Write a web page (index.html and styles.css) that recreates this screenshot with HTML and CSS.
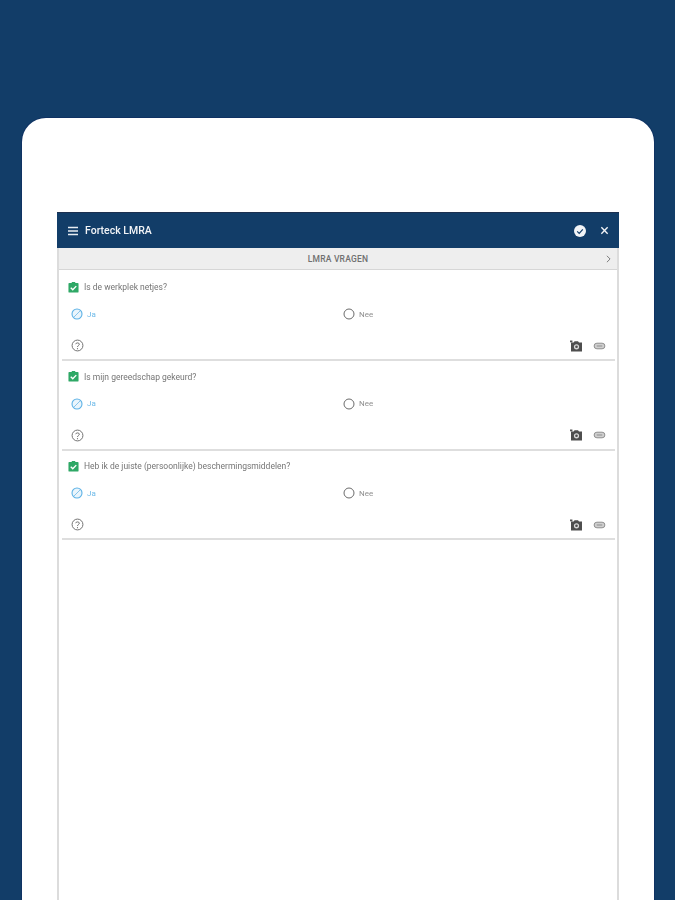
FILE: index.html
```html
<!doctype html>
<html lang="en">
	<head>
		<meta charset="UTF-8" />
		<meta name="viewport" content="width=device-width, initial-scale=1.0" />
		<title>Forteck LMRA</title>
		<link rel="stylesheet" href="styles.css">
	</head>
	<body>
		<svg class="icon-defs" width="0" height="0">
			<symbol id="i-check" viewBox="0 0 12 12">
				<rect x="0.5" y="1" width="11" height="10.5" rx="1" fill="#2fa866" />
				<rect x="4" y="0" width="4" height="2" rx="0.6" fill="#2fa866" />
				<path d="M3 6.3l2.2 2.2 3.8-4" fill="none" stroke="#fff" stroke-width="1.5" />
			</symbol>
			<symbol id="i-ja" viewBox="0 0 12 12">
				<circle cx="6" cy="6" r="5" fill="#eaf5fc" stroke="#5db2e6" stroke-width="1.1" />
				<path d="M3 9L9 3" stroke="#7cc0ea" stroke-width="0.9" />
			</symbol>
			<symbol id="i-nee" viewBox="0 0 12 12">
				<circle cx="6" cy="6" r="5" fill="none" stroke="#6b6b6b" stroke-width="1" />
			</symbol>
			<symbol id="i-help" viewBox="0 0 12 12">
				<circle cx="6" cy="6" r="5" fill="none" stroke="#6e6e6e" stroke-width="0.9" />
				<path d="M4.3 4.8C4.4 3.2 7.7 3.2 7.7 4.8C7.7 6 6 6 6 7.4" fill="none" stroke="#6e6e6e" stroke-width="0.9" />
				<circle cx="6" cy="8.9" r="0.55" fill="#6e6e6e" />
			</symbol>
			<symbol id="i-camera" viewBox="0 0 14 14">
				<path d="M1 1.5h2.4v1.8H1z" fill="#555" />
				<path d="M2 3.4h2.6l1-1.2h3.4l1 1.2H13v9H2z" fill="#4e4e4e" />
				<circle cx="7.5" cy="7.8" r="2.6" fill="#d8d8d8" />
				<circle cx="7.5" cy="7.8" r="1.3" fill="#4e4e4e" />
			</symbol>
			<symbol id="i-clip" viewBox="0 0 14 10">
				<rect x="1.2" y="2" width="11.6" height="6" rx="3" fill="#d0d0d0" stroke="#888" stroke-width="1" />
				<path d="M4 5h6" stroke="#888" stroke-width="1" />
			</symbol>
		</svg>

		<div class="panel">
			<div class="app">
				<header class="topbar">
					<svg class="menu-icon" viewBox="0 0 12 10"><path d="M1 1.5h10M1 5h10M1 8.5h10" stroke="#e8edf2" stroke-width="1.3" /></svg>
					<span class="app-title">Forteck LMRA</span>
					<svg class="done-icon" viewBox="0 0 12 12">
						<circle cx="6" cy="6" r="6" fill="#f2f4f7" />
						<path d="M3.2 6.3l2 2 3.6-4" fill="none" stroke="#123d68" stroke-width="1.2" />
					</svg>
					<svg class="close-icon" viewBox="0 0 10 10"><path d="M1.5 1.5l7 7M8.5 1.5l-7 7" stroke="#f2f4f7" stroke-width="1.5" /></svg>
				</header>
				<div class="subbar">
					<span class="subbar-title">LMRA VRAGEN</span>
					<svg class="next-icon" viewBox="0 0 6 10"><path d="M1 1l4 4-4 4" fill="none" stroke="#777" stroke-width="1.2" /></svg>
				</div>

				<div class="cards">
					<section class="card">
						<div class="question">
							<svg class="check"><use href="#i-check" /></svg>
							<span>Is de werkplek netjes?</span>
						</div>
						<div class="answers">
							<div class="answer yes"><svg class="radio"><use href="#i-ja" /></svg><span>Ja</span></div>
							<div class="answer"><svg class="radio"><use href="#i-nee" /></svg><span>Nee</span></div>
						</div>
						<div class="actions">
							<svg class="help"><use href="#i-help" /></svg>
							<svg class="camera"><use href="#i-camera" /></svg>
							<svg class="clip"><use href="#i-clip" /></svg>
						</div>
					</section>

					<section class="card">
						<div class="question">
							<svg class="check"><use href="#i-check" /></svg>
							<span>Is mijn gereedschap gekeurd?</span>
						</div>
						<div class="answers">
							<div class="answer yes"><svg class="radio"><use href="#i-ja" /></svg><span>Ja</span></div>
							<div class="answer"><svg class="radio"><use href="#i-nee" /></svg><span>Nee</span></div>
						</div>
						<div class="actions">
							<svg class="help"><use href="#i-help" /></svg>
							<svg class="camera"><use href="#i-camera" /></svg>
							<svg class="clip"><use href="#i-clip" /></svg>
						</div>
					</section>

					<section class="card">
						<div class="question">
							<svg class="check"><use href="#i-check" /></svg>
							<span>Heb ik de juiste (persoonlijke) beschermingsmiddelen?</span>
						</div>
						<div class="answers">
							<div class="answer yes"><svg class="radio"><use href="#i-ja" /></svg><span>Ja</span></div>
							<div class="answer"><svg class="radio"><use href="#i-nee" /></svg><span>Nee</span></div>
						</div>
						<div class="actions">
							<svg class="help"><use href="#i-help" /></svg>
							<svg class="camera"><use href="#i-camera" /></svg>
							<svg class="clip"><use href="#i-clip" /></svg>
						</div>
					</section>
				</div>
			</div>
		</div>
	</body>
</html>
```

FILE: styles.css
```css
html, body { margin: 0; height: 900px; overflow: hidden; }
body { background: #123d68; font-family: Roboto, Lato, sans-serif; padding-top: 118px; box-sizing: border-box; }
.icon-defs { display: block; height: 0; }
.panel { margin: 0 21px 0 22px; height: 782px; padding: 94px 35px 0; box-sizing: border-box; background: #fff; border-radius: 24px 24px 0 0; box-shadow: 0 0 0 1px #0f3263; }
.app { height: 688px; border-left: 2px solid #dcdcdc; border-right: 2px solid #dcdcdc; filter: blur(0.35px); }
.topbar { display: flex; align-items: center; height: 36px; margin: 0 -2px; padding: 0 10px; background: #123d68; border-top: 1px solid #1c3050; box-sizing: border-box; }
.menu-icon { width: 12px; height: 10px; }
.app-title { margin-left: 6px; color: #f2f4f7; font-size: 10.5px; font-weight: 500; }
.done-icon { width: 12px; height: 12px; margin-left: auto; }
.close-icon { width: 9px; height: 9px; margin-left: 14px; }
.subbar { position: relative; display: flex; justify-content: center; align-items: center; height: 22px; background: #eeeeee; border-bottom: 1px solid #d6d6d6; box-sizing: border-box; }
.subbar-title { color: #707070; font-size: 8.5px; font-weight: 500; letter-spacing: 0.2px; }
.next-icon { position: absolute; right: 6px; top: 7px; width: 5px; height: 8px; }
.cards { padding-top: 1.5px; }
.card { height: 89.5px; margin: 0 2px 0 3px; padding: 9.5px 0 0 6px; background: #fff; border-bottom: 2px solid #dedede; box-sizing: border-box; }
.question { display: flex; align-items: center; gap: 5px; height: 12px; color: #757575; font-size: 8.5px; }
.check { width: 11px; height: 11px; }
.answers { display: flex; margin-top: 15px; padding-left: 3px; }
.answer { display: flex; align-items: center; gap: 4px; width: 272px; height: 12px; color: #8f8f8f; font-size: 8px; }
.answer.yes { color: #6cb9e8; }
.radio { width: 12px; height: 12px; }
.actions { display: flex; align-items: center; margin-top: 19px; padding: 0 9px 0 3px; height: 13px; }
.help { width: 13px; height: 13px; }
.camera { width: 14px; height: 14px; margin-left: auto; }
.clip { width: 13px; height: 10px; margin-left: 10px; }
```
